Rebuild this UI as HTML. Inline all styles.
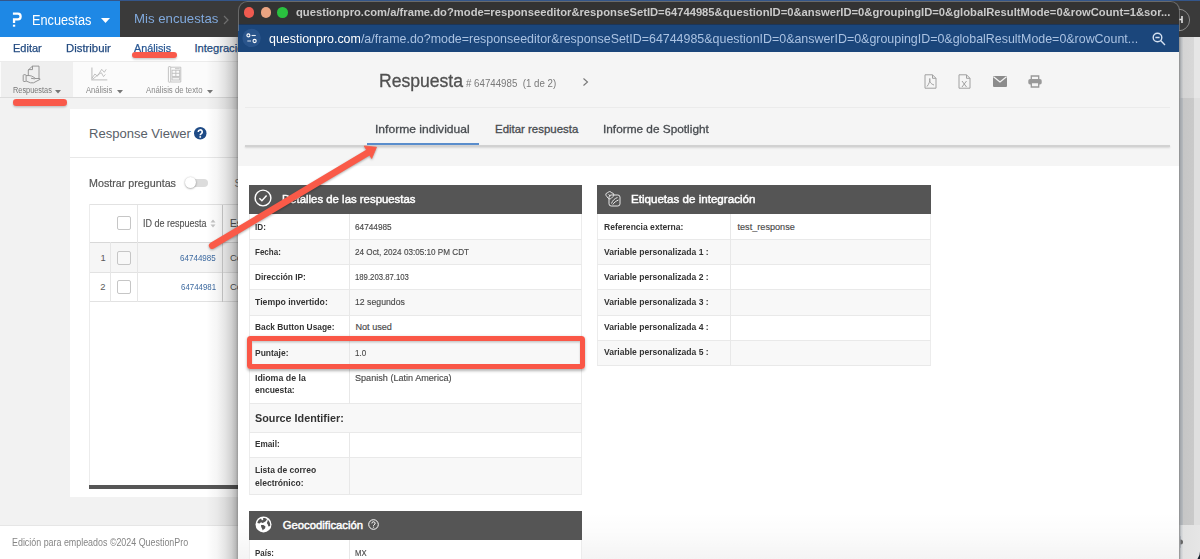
<!DOCTYPE html>
<html><head><meta charset="utf-8">
<style>
*{box-sizing:border-box;margin:0;padding:0}
html,body{width:1200px;height:559px;overflow:hidden;background:#f2f2f2;font-family:"Liberation Sans",sans-serif;position:relative}
.a{position:absolute}
.t{position:absolute;white-space:nowrap;line-height:1}
</style></head>
<body>
<div class="a" style="left:0px;top:0px;width:1200px;height:37px;background:#3a3a3a;"></div>
<div class="a" style="left:0px;top:0px;width:1200px;height:1px;background:#34568a;"></div>
<div class="a" style="left:0px;top:1px;width:120px;height:36px;background:#1e88e5;"></div>
<svg class="a" style="left:11px;top:12px" width="13" height="16" viewBox="0 0 13 16"><path d="M1.9 1.7H6.9A2.88 2.88 0 0 1 6.9 7.45H3.05V11.1" fill="none" stroke="#fff" stroke-width="2.3"/><rect x="1.9" y="12.7" width="2.3" height="2" fill="#fff"/></svg>
<div class="t" id="enc" style="left:32.40px;top:13.87px;font-size:13.91px;color:#fff;transform:scaleX(0.9161);transform-origin:0 0;">Encuestas</div>
<svg class="a" style="left:101px;top:18px" width="9" height="5" viewBox="0 0 9 5"><path d="M0 0H9L4.5 5Z" fill="#fff"/></svg>
<div class="t" id="mis" style="left:133.70px;top:13.36px;font-size:12.75px;color:#80a9dc;transform:scaleX(1.0359);transform-origin:0 0;">Mis encuestas</div>
<svg class="a" style="left:223px;top:15px" width="6" height="10" viewBox="0 0 6 10"><path d="M1 1L5 5L1 9" fill="none" stroke="#6f6f6f" stroke-width="1.2"/></svg>
<svg class="a" style="left:1160px;top:0px" width="40" height="40" viewBox="0 0 40 40"><circle cx="18.8" cy="20" r="10.8" fill="none" stroke="#8a8a8a" stroke-width="1"/><path d="M15 16V23M22 16V23M15 19.5H22" stroke="#e0e0e0" stroke-width="1.6"/></svg>
<div class="a" style="left:0px;top:37px;width:1200px;height:24px;background:#fff;"></div>
<div class="t" id="n1" style="left:13.00px;top:43.31px;font-size:11.16px;color:#234b80;transform:scaleX(0.9868);transform-origin:0 0;-webkit-text-stroke:0.25px #234b80;">Editar</div>
<div class="t" id="n2" style="left:65.60px;top:43.31px;font-size:11.16px;color:#234b80;transform:scaleX(1.0177);transform-origin:0 0;-webkit-text-stroke:0.25px #234b80;">Distribuir</div>
<div class="t" id="n3" style="left:133.60px;top:43.31px;font-size:11.16px;color:#2a5894;transform:scaleX(0.9662);transform-origin:0 0;-webkit-text-stroke:0.25px #2a5894;">Análisis</div>
<div class="t" id="n4" style="left:194.40px;top:43.31px;font-size:11.16px;color:#234b80;-webkit-text-stroke:0.25px #234b80;">Integraci&oacute;n</div>
<div class="a" style="left:0px;top:61px;width:1200px;height:37px;background:#fbfbfb;border-top:1px solid #ececec;border-bottom:1px solid #dcdcdc"></div>
<div class="a" style="left:1px;top:62px;width:72px;height:35px;background:#efefef;"></div>
<svg class="a" style="left:22px;top:65px" width="20" height="20" viewBox="0 0 20 20" fill="none" stroke="#8c8c8c" stroke-width="0.9" stroke-linejoin="round"><path d="M6.3 10.6V5L10.5 1.1H17V14.2"/><path d="M10.5 1.1V4.6H6.3"/><rect x="1.2" y="9.7" width="2.9" height="6.8" rx="0.8"/><path d="M4.1 10.6C6 10.3 8 10.6 9.5 11L12.8 12.8C13.4 13.3 13 14 12 13.8L9 13.2"/><path d="M4.1 16L8.5 17.8H11.5L18.2 14.3L17.2 13.5H12.8"/></svg>
<div class="t" id="tb1" style="left:12.90px;top:86.16px;font-size:8.99px;color:#777;transform:scaleX(0.8180);transform-origin:0 0;">Respuestas</div>
<svg class="a" style="left:55px;top:90px" width="6" height="3.5" viewBox="0 0 6 3.5"><path d="M0 0H6L3 3.5Z" fill="#777"/></svg>
<svg class="a" style="left:90px;top:67px" width="18" height="14" viewBox="0 0 18 14" fill="none"><path d="M1.9 0.6V12.9H17.3" stroke="#c9c9c9" stroke-width="1.3"/><path d="M1.9 11.3L4.9 7L7.4 9.2L11.7 2.3L14.3 5.3L16.2 2.3" stroke="#b4b4b4" stroke-width="0.8"/><path d="M2.7 12.2L7.9 7.9L11.3 5.7L13.5 9.6L15.4 7.4" stroke="#b4b4b4" stroke-width="0.8"/></svg>
<div class="t" id="tb2" style="left:86.00px;top:86.16px;font-size:8.99px;color:#888;transform:scaleX(0.8471);transform-origin:0 0;">Análisis</div>
<svg class="a" style="left:117px;top:90px" width="6" height="3.5" viewBox="0 0 6 3.5"><path d="M0 0H6L3 3.5Z" fill="#777"/></svg>
<svg class="a" style="left:167px;top:65px" width="16" height="19" viewBox="0 0 16 19" fill="none" stroke="#bdbdbd" stroke-width="0.9"><rect x="1.4" y="1.6" width="2.3" height="15.6" rx="0.6"/><path d="M3.7 2.2H13.8V17H3.7"/><rect x="5" y="5.2" width="7.7" height="6.2"/><path d="M8.85 5.2V11.4M5 8.3H12.7"/><rect x="5" y="12.7" width="7.7" height="2.3"/><path d="M8 3.7H12.7"/></svg>
<div class="t" id="tb3" style="left:146.30px;top:86.16px;font-size:8.99px;color:#888;transform:scaleX(0.8641);transform-origin:0 0;">Análisis de texto</div>
<svg class="a" style="left:207px;top:90px" width="6" height="3.5" viewBox="0 0 6 3.5"><path d="M0 0H6L3 3.5Z" fill="#777"/></svg>
<div class="a" style="left:70px;top:109px;width:320px;height:388px;background:#fff;"></div>
<div class="t" id="rv" style="left:89.00px;top:127.31px;font-size:13.04px;color:#596068;">Response Viewer</div>
<svg class="a" style="left:194px;top:127px" width="12.5" height="12.5" viewBox="0 0 13 13"><circle cx="6.5" cy="6.5" r="6.5" fill="#1f4b86"/><path d="M4.4 5.1a2.1 2.1 0 1 1 3.1 1.9c-.8.4-1 .7-1 1.5" fill="none" stroke="#fff" stroke-width="1.7"/><circle cx="6.5" cy="10.3" r="1" fill="#fff"/></svg>
<div class="a" style="left:70px;top:157px;width:320px;height:1px;background:#e8e8e8;"></div>
<div class="t" id="mp" style="left:89.10px;top:177.81px;font-size:10.58px;color:#555;transform:scaleX(1.0129);transform-origin:0 0;-webkit-text-stroke:0.2px #555;">Mostrar preguntas</div>
<div class="a" style="left:188px;top:178.5px;width:20px;height:8px;background:#dcdcdc;border-radius:4px"></div>
<div class="a" style="left:184.5px;top:176.8px;width:11.5px;height:11.5px;border-radius:50%;background:#fff;box-shadow:0 0.5px 2px rgba(0,0,0,.45)"></div>
<div class="t" id="s2" style="left:234.50px;top:177.81px;font-size:10.58px;color:#777;">S</div>
<div class="a" style="left:89px;top:204px;width:300px;height:98px;background:#fff;border:1px solid #e2e2e2;border-right:none"></div>
<div class="a" style="left:89px;top:204px;width:1px;height:283px;background:#ececec;"></div>
<div class="a" style="left:90px;top:242px;width:299px;height:31px;background:#f6f6f6;border-top:1px solid #d8d8d8;border-bottom:1px solid #e2e2e2"></div>
<div class="a" style="left:110px;top:242px;width:1px;height:60px;background:#e6e6e6;"></div>
<div class="a" style="left:137px;top:205px;width:1px;height:97px;background:#e6e6e6;"></div>
<div class="a" style="left:222px;top:205px;width:1px;height:97px;background:#cdcdcd;"></div>
<div class="a" style="left:117px;top:216px;width:14px;height:14px;border:1px solid #c6c6c6;border-radius:2px;background:#fff"></div>
<div class="a" style="left:117px;top:251px;width:14px;height:14px;border:1px solid #c6c6c6;border-radius:2px;background:#f8f8f8"></div>
<div class="a" style="left:117px;top:280.2px;width:14px;height:14px;border:1px solid #c6c6c6;border-radius:2px;background:#fff"></div>
<div class="t" id="idr" style="left:143.20px;top:218.90px;font-size:10.00px;color:#555;transform:scaleX(0.8983);transform-origin:0 0;-webkit-text-stroke:0.15px #555;">ID de respuesta</div>
<svg class="a" style="left:210px;top:219px" width="6" height="9" viewBox="0 0 6 9"><path d="M0.5 3.6L3 0.6L5.5 3.6ZM0.5 5.4L3 8.4L5.5 5.4Z" fill="#c4c4c4"/></svg>
<div class="t" id="es" style="left:230.00px;top:218.90px;font-size:10.00px;color:#555;-webkit-text-stroke:0.15px #555;">Es</div>
<div class="t" id="one" style="left:100.60px;top:252.79px;font-size:9.42px;color:#5a5a5a;">1</div>
<div class="t" id="two" style="left:100.20px;top:281.89px;font-size:9.42px;color:#5a5a5a;">2</div>
<div class="t" id="r1" style="left:180.20px;top:252.79px;font-size:9.42px;color:#3d6aa0;transform:scaleX(0.8544);transform-origin:0 0;">64744985</div>
<div class="t" id="r2" style="left:181.00px;top:281.89px;font-size:9.42px;color:#3d6aa0;transform:scaleX(0.8374);transform-origin:0 0;">64744981</div>
<div class="t" id="co1" style="left:230.00px;top:252.79px;font-size:9.42px;color:#555;">Co</div>
<div class="t" id="co2" style="left:230.00px;top:281.89px;font-size:9.42px;color:#555;">Co</div>
<div class="a" style="left:89px;top:485px;width:149px;height:4px;background:#565656;"></div>
<div class="a" style="left:0px;top:525px;width:1200px;height:34px;background:#fff;border-top:1px solid #e6e6e6"></div>
<div class="t" id="foot" style="left:12.40px;top:537.65px;font-size:10.29px;color:#858585;transform:scaleX(0.8649);transform-origin:0 0;">Edición para empleados ©2024 QuestionPro</div>
<div class="a" style="left:1179px;top:37px;width:21px;height:24px;background:#dedede;"></div>
<div class="a" style="left:1179px;top:61px;width:21px;height:37px;background:#d8d8d8;"></div>
<div class="a" style="left:1179px;top:98px;width:21px;height:427px;background:#cfcfcf;"></div>
<div class="a" style="left:1179px;top:525px;width:21px;height:34px;background:#e6e6e6;"></div>
<div class="a" style="left:1179px;top:98px;width:21px;height:427px;background:linear-gradient(90deg,#8c8c8c 0px,#a4a8ad 1.5px,#b4b8bc 3.5px,#c6c6c6 4.5px,#cacaca 15px,#dfdfdf 15.5px);"></div>
<div class="a" style="left:1179px;top:37px;width:21px;height:61px;background:linear-gradient(90deg,#8c8c8c 0px,#b4b8bc 2px,#d4d4d4 4.5px,#d8d8d8 15px,#e6e6e6 15.5px);"></div>
<div class="a" style="left:1179px;top:525px;width:21px;height:34px;background:linear-gradient(90deg,#8c8c8c 0px,#c8ccd0 2px,#e2e2e2 4.5px,#e6e6e6);"></div>
<svg class="a" style="left:1186px;top:545px" width="14" height="14" viewBox="0 0 14 14"><path d="M14 6.6A12 12 0 0 1 11.45 14H14Z" fill="#1d2530"/></svg>
<svg class="a" style="left:1179px;top:536px" width="6" height="13" viewBox="0 0 6 13"><path d="M0.5 0.5H1.5V11.5H0.5" fill="none" stroke="#9aa0a8" stroke-width="0.8"/><path d="M1.5 3.5A2.5 2.5 0 0 1 1.5 8.5Z" fill="#666"/></svg>
<div class="a" style="left:206px;top:37px;width:32px;height:522px;background:linear-gradient(90deg,rgba(0,0,0,0),rgba(0,0,0,.04) 35%,rgba(0,0,0,.1) 60%,rgba(0,0,0,.18) 80%,rgba(0,0,0,.27) 93%,rgba(0,0,0,.4));"></div>
<div class="a" style="left:238px;top:1px;width:941px;height:558px;background:linear-gradient(180deg,#333 0,#333 23px,#f5f5f5 23px);border-radius:9px 9px 0 0;overflow:hidden">
<div class="a" style="left:0px;top:23px;width:941px;height:28px;background:#1b467b;"></div>
<div class="a" style="left:0px;top:23px;width:941px;height:1px;background:#1d3556;"></div>
</div>
<div class="a" style="left:237.5px;top:0.5px;width:942px;height:30px;border:1px solid rgba(150,150,150,.55);border-bottom:none;border-radius:9.5px 9.5px 0 0"></div>
<div class="a" style="left:243.7px;top:7px;width:10.6px;height:10.6px;border-radius:50%;background:#f05a4f"></div>
<div class="a" style="left:260.7px;top:7px;width:10.6px;height:10.6px;border-radius:50%;background:#eaa482"></div>
<div class="a" style="left:277.1px;top:7px;width:10.6px;height:10.6px;border-radius:50%;background:#2ac13f"></div>
<div class="t" id="ttl" style="left:295.50px;top:6.99px;font-size:11.30px;color:#cacaca;font-weight:bold;transform:scaleX(0.9937);transform-origin:0 0;">questionpro.com/a/frame.do?mode=responseeditor&amp;responseSetID=64744985&amp;questionID=0&amp;answerID=0&amp;groupingID=0&amp;globalResultMode=0&amp;rowCount=1&amp;sor...</div>
<svg class="a" style="left:242px;top:28px" width="20" height="20" viewBox="0 0 20 20"><circle cx="9.6" cy="9.9" r="9.2" fill="#2f5a90" opacity="0.75"/><circle cx="6.4" cy="7.4" r="1.5" fill="none" stroke="#fff" stroke-width="1.1"/><path d="M9.6 7.5H13.8" stroke="#e8eef6" stroke-width="1.1"/><path d="M5.3 13H9" stroke="#c8d4e4" stroke-width="1.1"/><circle cx="12.6" cy="13" r="1.6" fill="none" stroke="#fff" stroke-width="1.1"/></svg>
<div class="t" id="adr" style="left:268.70px;top:32.39px;font-size:13.19px;color:#fff;transform:scaleX(0.9424);transform-origin:0 0;">questionpro.com<span style="color:#aac2e2">/a/frame.do?mode=responseeditor&amp;responseSetID=64744985&amp;questionID=0&amp;answerID=0&amp;groupingID=0&amp;globalResultMode=0&amp;rowCount...</span></div>
<svg class="a" style="left:1152px;top:32px" width="14" height="14" viewBox="0 0 14 14" fill="none" stroke="#d4e0f0" stroke-width="1.4"><circle cx="5.5" cy="5.5" r="4.3"/><path d="M8.6 8.6L13 13M3.4 5.5H7.6"/></svg>
<div class="t" id="resp" style="left:379.00px;top:73.15px;font-size:17.83px;color:#505050;transform:scaleX(0.9859);transform-origin:0 0;-webkit-text-stroke:0.3px #505050;">Respuesta</div>
<div class="t" id="rnum" style="left:465.50px;top:78.34px;font-size:11.01px;color:#7a7a7a;transform:scaleX(0.8829);transform-origin:0 0;"># 64744985 &nbsp;(1 de 2)</div>
<svg class="a" style="left:582px;top:77px" width="7" height="10" viewBox="0 0 7 10"><path d="M1.5 1.5L5.5 5L1.5 8.5" fill="none" stroke="#777" stroke-width="1.1"/></svg>
<svg class="a" style="left:924px;top:74px" width="13" height="15" viewBox="0 0 13 15" fill="none" stroke="#a0a0a0" stroke-width="1"><path d="M1 0.8H8.5L12 4.3V14.2H1Z"/><path d="M8.5 0.8V4.3H12"/><path d="M3 12.5C5 10 6.2 7 5.8 4.5C5.2 7 6.5 10 10 11"/></svg>
<svg class="a" style="left:958px;top:74px" width="13" height="15" viewBox="0 0 13 15" fill="none" stroke="#a0a0a0" stroke-width="1"><path d="M1 0.8H8.5L12 4.3V14.2H1Z"/><path d="M8.5 0.8V4.3H12"/><path d="M4 7L8.5 13M8.5 7L4 13"/></svg>
<svg class="a" style="left:993px;top:76px" width="14" height="11" viewBox="0 0 14 11"><rect x="0" y="0" width="14" height="11" rx="1" fill="#8c8c8c"/><path d="M0.5 0.8L7 6L13.5 0.8" fill="none" stroke="#f4f4f4" stroke-width="1.2"/></svg>
<svg class="a" style="left:1028px;top:75px" width="14" height="13" viewBox="0 0 14 13"><path d="M3.3 4V1H10.7V4" fill="none" stroke="#999" stroke-width="1.3"/><rect x="0.3" y="4" width="13.4" height="5.6" rx="1.8" fill="#999"/><path d="M3.3 7.5H10.7V12H3.3Z" fill="#f4f4f4" stroke="#999" stroke-width="1.3"/></svg>
<div class="a" style="left:245px;top:107px;width:925px;height:1px;background:#ebebeb;"></div>
<div class="t" id="tab1" style="left:374.60px;top:123.87px;font-size:11.45px;color:#484c50;transform:scaleX(1.0558);transform-origin:0 0;-webkit-text-stroke:0.3px #484c50;">Informe individual</div>
<div class="t" id="tab2" style="left:495.00px;top:123.87px;font-size:11.45px;color:#484c50;-webkit-text-stroke:0.3px #484c50;">Editar respuesta</div>
<div class="t" id="tab3" style="left:602.80px;top:123.87px;font-size:11.45px;color:#484c50;transform:scaleX(1.0337);transform-origin:0 0;-webkit-text-stroke:0.3px #484c50;">Informe de Spotlight</div>
<div class="a" style="left:245px;top:145px;width:925px;height:1.5px;background:#d2d2d2;box-shadow:0 1px 2px rgba(0,0,0,.13)"></div>
<div class="a" style="left:367px;top:143px;width:112px;height:2px;background:#5a8dcc;"></div>
<div class="a" style="left:238px;top:166px;width:941px;height:393px;background:#fff;"></div>
<div class="a" style="left:238px;top:512px;width:941px;height:47px;background:linear-gradient(180deg,rgba(0,0,0,0),rgba(0,0,0,.012) 40%,rgba(0,0,0,.045));"></div>
<div class="a" style="left:249px;top:185px;width:333px;height:29px;background:#555;"></div>
<div class="a" style="left:249px;top:214px;width:333px;height:26px;background:#fff;border-left:1px solid #ececec;border-right:1px solid #ececec;border-bottom:1px solid #e9e9e9"></div>
<div class="a" style="left:349px;top:214px;width:1px;height:26px;background:#e8e8e8;"></div>
<div class="a" style="left:249px;top:240px;width:333px;height:25px;background:#f8f8f8;border-left:1px solid #ececec;border-right:1px solid #ececec;border-bottom:1px solid #e9e9e9"></div>
<div class="a" style="left:349px;top:240px;width:1px;height:25px;background:#e8e8e8;"></div>
<div class="a" style="left:249px;top:265px;width:333px;height:25px;background:#fff;border-left:1px solid #ececec;border-right:1px solid #ececec;border-bottom:1px solid #e9e9e9"></div>
<div class="a" style="left:349px;top:265px;width:1px;height:25px;background:#e8e8e8;"></div>
<div class="a" style="left:249px;top:290px;width:333px;height:26px;background:#f8f8f8;border-left:1px solid #ececec;border-right:1px solid #ececec;border-bottom:1px solid #e9e9e9"></div>
<div class="a" style="left:349px;top:290px;width:1px;height:26px;background:#e8e8e8;"></div>
<div class="a" style="left:249px;top:316px;width:333px;height:25px;background:#fff;border-left:1px solid #ececec;border-right:1px solid #ececec;border-bottom:1px solid #e9e9e9"></div>
<div class="a" style="left:349px;top:316px;width:1px;height:25px;background:#e8e8e8;"></div>
<div class="a" style="left:249px;top:341px;width:333px;height:25px;background:#f8f8f8;border-left:1px solid #ececec;border-right:1px solid #ececec;border-bottom:1px solid #e9e9e9"></div>
<div class="a" style="left:349px;top:341px;width:1px;height:25px;background:#e8e8e8;"></div>
<div class="a" style="left:249px;top:366px;width:333px;height:38px;background:#fff;border-left:1px solid #ececec;border-right:1px solid #ececec;border-bottom:1px solid #e9e9e9"></div>
<div class="a" style="left:349px;top:366px;width:1px;height:38px;background:#e8e8e8;"></div>
<div class="a" style="left:249px;top:404px;width:333px;height:29px;background:#f8f8f8;border-left:1px solid #ececec;border-right:1px solid #ececec;border-bottom:1px solid #e9e9e9"></div>
<div class="a" style="left:249px;top:433px;width:333px;height:25px;background:#fff;border-left:1px solid #ececec;border-right:1px solid #ececec;border-bottom:1px solid #e9e9e9"></div>
<div class="a" style="left:349px;top:433px;width:1px;height:25px;background:#e8e8e8;"></div>
<div class="a" style="left:249px;top:458px;width:333px;height:37px;background:#f8f8f8;border-left:1px solid #ececec;border-right:1px solid #ececec;border-bottom:1px solid #e9e9e9"></div>
<div class="a" style="left:349px;top:458px;width:1px;height:37px;background:#e8e8e8;"></div>
<div class="t" id="l1_0" style="left:255.40px;top:222.84px;font-size:9.13px;color:#333;font-weight:bold;transform:scaleX(0.8931);transform-origin:0 0;">ID:</div>
<div class="t" id="l1_1" style="left:255.40px;top:247.84px;font-size:9.13px;color:#333;font-weight:bold;transform:scaleX(0.8790);transform-origin:0 0;">Fecha:</div>
<div class="t" id="l1_2" style="left:255.40px;top:273.04px;font-size:9.13px;color:#333;font-weight:bold;transform:scaleX(0.9104);transform-origin:0 0;">Dirección IP:</div>
<div class="t" id="l1_3" style="left:255.40px;top:297.84px;font-size:9.13px;color:#333;font-weight:bold;transform:scaleX(0.9531);transform-origin:0 0;">Tiempo invertido:</div>
<div class="t" id="l1_4" style="left:255.40px;top:322.84px;font-size:9.13px;color:#333;font-weight:bold;transform:scaleX(0.9168);transform-origin:0 0;">Back Button Usage:</div>
<div class="t" id="l1_5" style="left:255.40px;top:348.64px;font-size:9.13px;color:#333;font-weight:bold;transform:scaleX(0.9304);transform-origin:0 0;">Puntaje:</div>
<div class="t" id="l1_6" style="left:255.40px;top:374.24px;font-size:9.13px;color:#333;font-weight:bold;transform:scaleX(0.9633);transform-origin:0 0;">Idioma de la</div>
<div class="t" id="l1_7" style="left:255.40px;top:386.34px;font-size:9.13px;color:#333;font-weight:bold;transform:scaleX(0.9316);transform-origin:0 0;">encuesta:</div>
<div class="t" id="l1_8" style="left:255.40px;top:440.14px;font-size:9.13px;color:#333;font-weight:bold;transform:scaleX(0.9009);transform-origin:0 0;">Email:</div>
<div class="t" id="l1_9" style="left:255.40px;top:465.94px;font-size:9.13px;color:#333;font-weight:bold;transform:scaleX(0.9339);transform-origin:0 0;">Lista de correo</div>
<div class="t" id="l1_10" style="left:255.40px;top:478.74px;font-size:9.13px;color:#333;font-weight:bold;transform:scaleX(0.9375);transform-origin:0 0;">electrónico:</div>
<div class="t" id="v1_0" style="left:355.40px;top:222.84px;font-size:9.13px;color:#4a4a4a;transform:scaleX(0.9032);transform-origin:0 0;-webkit-text-stroke:0.15px #4a4a4a;">64744985</div>
<div class="t" id="v1_1" style="left:355.40px;top:247.84px;font-size:9.13px;color:#4a4a4a;transform:scaleX(0.8924);transform-origin:0 0;-webkit-text-stroke:0.15px #4a4a4a;">24 Oct, 2024 03:05:10 PM CDT</div>
<div class="t" id="v1_2" style="left:355.40px;top:273.04px;font-size:9.13px;color:#4a4a4a;transform:scaleX(0.8487);transform-origin:0 0;-webkit-text-stroke:0.15px #4a4a4a;">189.203.87.103</div>
<div class="t" id="v1_3" style="left:355.40px;top:297.84px;font-size:9.13px;color:#4a4a4a;transform:scaleX(0.9549);transform-origin:0 0;-webkit-text-stroke:0.15px #4a4a4a;">12 segundos</div>
<div class="t" id="v1_4" style="left:355.40px;top:322.84px;font-size:9.13px;color:#4a4a4a;-webkit-text-stroke:0.15px #4a4a4a;">Not used</div>
<div class="t" id="v1_5" style="left:355.40px;top:348.64px;font-size:9.13px;color:#4a4a4a;transform:scaleX(0.8798);transform-origin:0 0;-webkit-text-stroke:0.15px #4a4a4a;">1.0</div>
<div class="t" id="v1_6" style="left:355.40px;top:374.24px;font-size:9.13px;color:#4a4a4a;transform:scaleX(0.9965);transform-origin:0 0;-webkit-text-stroke:0.15px #4a4a4a;">Spanish (Latin America)</div>
<div class="t" id="srcid" style="left:255.40px;top:412.32px;font-size:11.74px;color:#333;font-weight:bold;transform:scaleX(0.9197);transform-origin:0 0;">Source Identifier:</div>
<svg class="a" style="left:254px;top:188.8px" width="18" height="18" viewBox="0 0 18 18"><circle cx="9" cy="9" r="7.9" fill="none" stroke="#fff" stroke-width="1.4"/><path d="M5.4 9.3L7.9 11.7L12.6 6.6" fill="none" stroke="#fff" stroke-width="1.5"/></svg>
<div class="t" id="h1" style="left:282.30px;top:193.59px;font-size:11.30px;color:#fff;transform:scaleX(1.0075);transform-origin:0 0;-webkit-text-stroke:0.45px #fff;">Detalles de las respuestas</div>
<div class="a" style="left:249px;top:511px;width:333px;height:29px;background:#555;"></div>
<div class="a" style="left:249px;top:540px;width:333px;height:26px;background:#fff;border-left:1px solid #ececec;border-right:1px solid #ececec;border-bottom:1px solid #e9e9e9"></div>
<div class="a" style="left:349px;top:540px;width:1px;height:26px;background:#e8e8e8;"></div>
<div class="t" id="l3_0" style="left:255.40px;top:548.54px;font-size:9.13px;color:#333;font-weight:bold;transform:scaleX(0.8690);transform-origin:0 0;">País:</div>
<div class="t" id="v3_0" style="left:355.40px;top:548.54px;font-size:9.13px;color:#4a4a4a;transform:scaleX(0.8430);transform-origin:0 0;-webkit-text-stroke:0.15px #4a4a4a;">MX</div>
<svg class="a" style="left:255px;top:516px" width="17" height="17" viewBox="0 0 17 17"><circle cx="8.5" cy="8.4" r="8" fill="#fff"/><path d="M2.3 7C2.5 5 4 3.2 6 2.4L7 4.5L8.3 3.5L8 2C9.5 1.8 11 2.3 12 3L11 5L9.2 6.3L7.5 7L6 6.2L4.5 7.5Z" fill="#555"/><path d="M12.8 3.8C14.5 5.2 15.5 7.5 15.2 10L13.5 10.5L12.8 8.5L11.8 7L12.5 5.5Z" fill="#555"/><path d="M6 9L8.5 9L10.5 10.5L10 12.5L8.5 13.5L7.8 14.5L7 12.5L6.2 11Z" fill="#555"/></svg>
<div class="t" id="h3" style="left:282.70px;top:519.99px;font-size:11.30px;color:#fff;-webkit-text-stroke:0.45px #fff;">Geocodificación</div>
<svg class="a" style="left:367.5px;top:519px" width="11" height="11" viewBox="0 0 11 11"><circle cx="5.5" cy="5.5" r="4.8" fill="none" stroke="#fff" stroke-width="1"/><path d="M3.9 4.4a1.6 1.6 0 1 1 2.3 1.4c-.5.3-.7.5-.7 1.1" fill="none" stroke="#fff" stroke-width="1"/><circle cx="5.5" cy="8.1" r="0.6" fill="#fff"/></svg>
<div class="a" style="left:597px;top:185px;width:334px;height:29px;background:#555;"></div>
<div class="a" style="left:597px;top:214px;width:334px;height:26px;background:#fff;border-left:1px solid #ececec;border-right:1px solid #ececec;border-bottom:1px solid #e9e9e9"></div>
<div class="a" style="left:730px;top:214px;width:1px;height:26px;background:#e8e8e8;"></div>
<div class="a" style="left:597px;top:240px;width:334px;height:25px;background:#f8f8f8;border-left:1px solid #ececec;border-right:1px solid #ececec;border-bottom:1px solid #e9e9e9"></div>
<div class="a" style="left:730px;top:240px;width:1px;height:25px;background:#e8e8e8;"></div>
<div class="a" style="left:597px;top:265px;width:334px;height:25px;background:#fff;border-left:1px solid #ececec;border-right:1px solid #ececec;border-bottom:1px solid #e9e9e9"></div>
<div class="a" style="left:730px;top:265px;width:1px;height:25px;background:#e8e8e8;"></div>
<div class="a" style="left:597px;top:290px;width:334px;height:26px;background:#f8f8f8;border-left:1px solid #ececec;border-right:1px solid #ececec;border-bottom:1px solid #e9e9e9"></div>
<div class="a" style="left:730px;top:290px;width:1px;height:26px;background:#e8e8e8;"></div>
<div class="a" style="left:597px;top:316px;width:334px;height:25px;background:#fff;border-left:1px solid #ececec;border-right:1px solid #ececec;border-bottom:1px solid #e9e9e9"></div>
<div class="a" style="left:730px;top:316px;width:1px;height:25px;background:#e8e8e8;"></div>
<div class="a" style="left:597px;top:341px;width:334px;height:25px;background:#f8f8f8;border-left:1px solid #ececec;border-right:1px solid #ececec;border-bottom:1px solid #e9e9e9"></div>
<div class="a" style="left:730px;top:341px;width:1px;height:25px;background:#e8e8e8;"></div>
<div class="t" id="l2_0" style="left:604.20px;top:222.64px;font-size:9.13px;color:#333;font-weight:bold;transform:scaleX(0.9374);transform-origin:0 0;">Referencia externa:</div>
<div class="t" id="v2_0" style="left:737.50px;top:222.64px;font-size:9.13px;color:#4a4a4a;-webkit-text-stroke:0.15px #4a4a4a;">test_response</div>
<div class="t" id="l2_1" style="left:604.20px;top:247.64px;font-size:9.13px;color:#333;font-weight:bold;transform:scaleX(0.9384);transform-origin:0 0;">Variable personalizada 1 :</div>
<div class="t" id="l2_2" style="left:604.20px;top:272.74px;font-size:9.13px;color:#333;font-weight:bold;transform:scaleX(0.9384);transform-origin:0 0;">Variable personalizada 2 :</div>
<div class="t" id="l2_3" style="left:604.20px;top:297.74px;font-size:9.13px;color:#333;font-weight:bold;transform:scaleX(0.9384);transform-origin:0 0;">Variable personalizada 3 :</div>
<div class="t" id="l2_4" style="left:604.20px;top:322.84px;font-size:9.13px;color:#333;font-weight:bold;transform:scaleX(0.9384);transform-origin:0 0;">Variable personalizada 4 :</div>
<div class="t" id="l2_5" style="left:604.20px;top:347.84px;font-size:9.13px;color:#333;font-weight:bold;transform:scaleX(0.9384);transform-origin:0 0;">Variable personalizada 5 :</div>
<svg class="a" style="left:603.5px;top:189.5px" width="18" height="18" viewBox="0 0 18 18" fill="none" stroke="#e8e8e8" stroke-width="1"><path d="M2.6 6.2C1.2 5.2 1.8 2.6 3.6 2.9C4.2 1.2 7 1.1 7.6 2.9C9.6 2.6 10.6 5 9.2 6.4L7.2 8.4C6.2 9.2 4.6 9 4 8Z"/><rect x="5" y="5" width="11" height="11" rx="2.2"/><path d="M7.5 13.5C8.5 10.5 10.5 8.5 13.5 7.5M8.8 14.5C10 12.5 12 11 14.5 10" /><path d="M4.5 4.5L6.5 6" /></svg>
<div class="t" id="h2" style="left:631.00px;top:193.59px;font-size:11.30px;color:#fff;transform:scaleX(1.0263);transform-origin:0 0;-webkit-text-stroke:0.45px #fff;">Etiquetas de integración</div>
<div class="a" style="left:247.2px;top:335.6px;width:337.6px;height:33.9px;border:5.1px solid #fa5747;border-radius:3.5px;box-shadow:0 1.5px 3px rgba(0,0,0,.3), inset 0 1.5px 2px rgba(0,0,0,.2)"></div>
<div class="a" style="left:132.3px;top:52.3px;width:44.4px;height:5.8px;border-radius:3px;background:#f9594a;box-shadow:0 1.5px 2px rgba(0,0,0,.2)"></div>
<div class="a" style="left:12.6px;top:99.2px;width:54.6px;height:6.6px;border-radius:3.3px;background:#f9594a;box-shadow:0 1.5px 2px rgba(0,0,0,.2)"></div>
<svg class="a" style="left:0;top:0;filter:drop-shadow(0.5px 1.5px 1.2px rgba(0,0,0,.32))" width="400" height="260" viewBox="0 0 400 260">
<path d="M212.2 245.6L367.9 152.7" stroke="#fa5a48" stroke-width="6.6" stroke-linecap="round" fill="none"/>
<path d="M364.2 146L376.5 147.2L371.7 158.5Z" fill="#fa5a48" stroke="#fa5a48" stroke-width="0.8" stroke-linejoin="round"/>
</svg>
</body></html>
